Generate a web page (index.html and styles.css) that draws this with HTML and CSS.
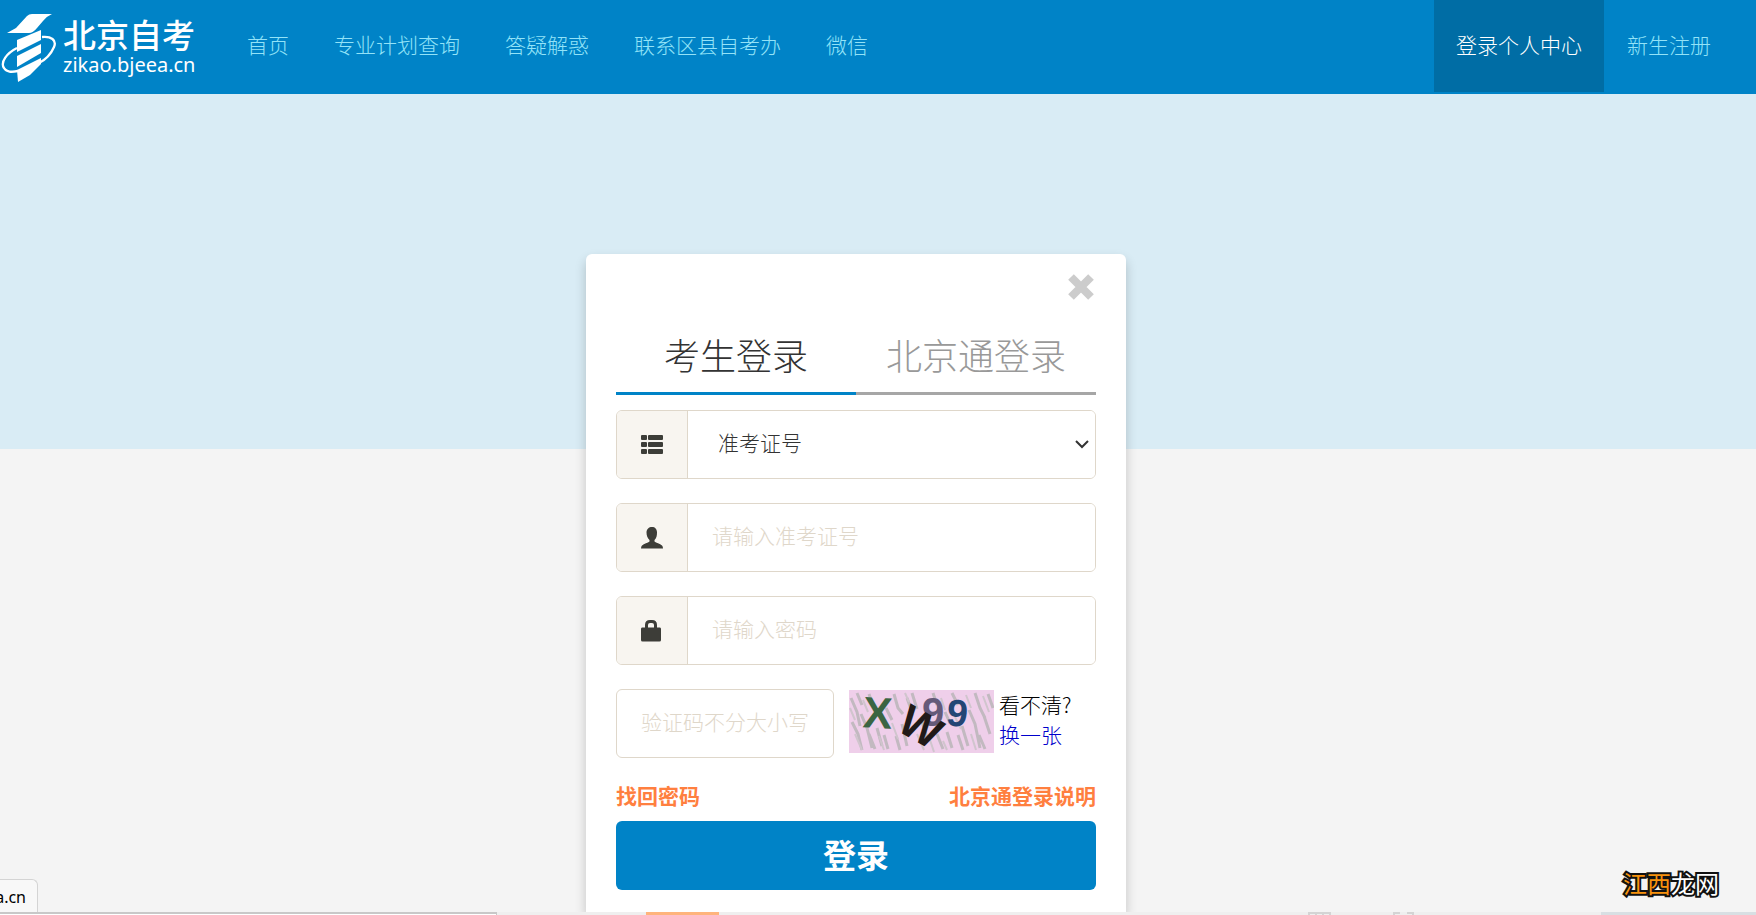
FILE: index.html
```html
<!DOCTYPE html>
<html lang="zh-CN">
<head>
<meta charset="utf-8">
<title>北京自考 - 登录</title>
<link rel="stylesheet" href="styles.css">
</head>
<body>
<header class="topbar">
  <a class="brand" href="#">
    <svg class="brand-mark" width="58" height="72" viewBox="0 0 58 72" aria-hidden="true">
      <g fill="#fff">
        <path d="M7 20L16 15L27 3Q29 1 32 1H52Q47 3 43 8L37 15Q33 20 29 20Z"/>
        <path d="M17 27L41 17V27L17 39Z"/>
        <path d="M17 43L41 31V40L17 54Z"/>
        <path d="M17 57L41 45V51L30 62L18 69Z"/>
      </g>
      <path d="M42 24C51 23 57 27 54 34C51 41 45 47 39 50M17 35C7 40 0 49 4 55C7 60 13 59 18 58" fill="none" stroke="#fff" stroke-width="2.3"/>
    </svg>
    <span class="brand-text">
      <span class="brand-name">北京自考</span>
      <span class="brand-url">zikao.bjeea.cn</span>
    </span>
  </a>
  <nav class="nav">
    <a href="#">首页</a>
    <a href="#">专业计划查询</a>
    <a href="#">答疑解惑</a>
    <a href="#">联系区县自考办</a>
    <a href="#">微信</a>
  </nav>
  <nav class="nav nav-user">
    <a class="active" href="#">登录个人中心</a>
    <a href="#">新生注册</a>
  </nav>
</header>

<main class="page">
  <section class="card">
    <button class="close" type="button" aria-label="关闭">
      <svg width="28" height="28" viewBox="0 0 28 28" aria-hidden="true"><path d="M4 4L24 24M24 4L4 24" stroke="#ccc" stroke-width="8"/></svg>
    </button>
    <div class="tabs">
      <button class="tab tab-on" type="button">考生登录</button>
      <button class="tab" type="button">北京通登录</button>
    </div>
    <form class="form">
      <div class="group">
        <label class="addon" for="kind" aria-label="证件类型">
          <svg width="22" height="20" viewBox="0 0 22 20" fill="#3d3d38" aria-hidden="true"><rect y="0" width="6" height="5" rx="1"/><rect x="7" y="0" width="15" height="5" rx="1"/><rect y="7" width="6" height="5" rx="1"/><rect x="7" y="7" width="15" height="5" rx="1"/><rect y="14" width="6" height="5" rx="1"/><rect x="7" y="14" width="15" height="5" rx="1"/></svg>
        </label>
        <select class="field select" id="kind"><option>准考证号</option></select>
        <svg class="chevron" width="14" height="10" viewBox="0 0 14 10" aria-hidden="true"><path d="M1 2L7 8L13 2" fill="none" stroke="#333" stroke-width="2"/></svg>
      </div>
      <div class="group">
        <label class="addon" for="user" aria-label="准考证号">
          <svg width="22" height="22" viewBox="0 0 22 22" fill="#3d3d38" aria-hidden="true"><path d="M11 0C14 0 16 2 16 5.500C16 9 15.500 11 13.500 13V14.500C15 16 19 16.500 21 18.500Q22 19.500 22 21.500H0Q0 19.500 1 18.500C3 16.500 7 16 8.500 14.500V13C6.500 11 5.500 9 5.500 5.500C5.500 2 8 0 11 0Z"/></svg>
        </label>
        <input class="field" id="user" type="text" placeholder="请输入准考证号">
      </div>
      <div class="group">
        <label class="addon" for="pass" aria-label="密码">
          <svg width="22" height="22" viewBox="0 0 22 22" fill="#3d3d38" aria-hidden="true"><path d="M1 7.500H19Q20 7.500 20 9V20Q20 21.500 18.500 21.500H1.500Q0 21.500 0 20V9Q0 7.500 1 7.500Z"/><path d="M5.500 8V5Q5.500 1.500 9 1.500H11Q14.500 1.500 14.500 5V8" fill="none" stroke="#3d3d38" stroke-width="3"/></svg>
        </label>
        <input class="field" id="pass" type="password" placeholder="请输入密码">
      </div>
      <div class="captcha">
        <input class="code" type="text" aria-label="验证码" placeholder="验证码不分大小写">
        <svg class="captcha-pic" width="145" height="63" viewBox="0 0 145 63" role="img" aria-label="验证码图片">
          <rect width="145" height="63" fill="#efcfea"/>
          <g fill="none" stroke="#c2b9c0" stroke-width="3">
            <path d="M2 8l6 14 3 14M8 3l5 12M3 32l6 12 4 16M12 24l6 14 5 20M20 44l6 15M28 38l5 18M35 45l4 14M37 18l6 12M45 4l4 14 5 6M53 34l5 22M47 46l4 14M63 3l5 16M72 28l6 20M88 44l6 15M98 42l5 16M96 22l5 11M103 3l6 12M113 36l6 20M120 20l6 14 5 24M126 3l5 15 5 10M135 26l6 18M139 4l5 14M109 45l5 15M130 45l6 14M84 3l4 12M20 4l3 9M58 8l5 14"/>
          </g>
          <g fill="none" stroke="#d0c5cd" stroke-width="2">
            <path d="M6 44l7 16M14 10l5 12M30 46l5 14M43 33l6 16M56 3l4 9M68 44l7 16M92 8l4 12M106 27l6 12M117 5l5 13M122 44l5 16M134 6l6 16M94 51l4 9M1 18l5 12M81 50l4 12"/>
          </g>
          <g class="glyphs">
            <text x="14" y="38" fill="#3b6542" font-size="44" transform="rotate(3 28 22)">X</text>
            <text x="73" y="36" fill="#655a79" font-size="40">9</text>
            <text x="98" y="36" fill="#234675" font-size="38" transform="rotate(6 108 22)">9</text>
            <text x="51" y="50" fill="#211a18" font-size="44" transform="rotate(30 68 36)">W</text>
          </g>
        </svg>
        <p class="captcha-help">看不清?<br><a href="#">换一张</a></p>
      </div>
      <div class="links">
        <a href="#">找回密码</a>
        <a href="#">北京通登录说明</a>
      </div>
      <button class="submit" type="submit">登录</button>
    </form>
  </section>
</main>

<footer class="strip">
  <span class="strip-box"></span>
  <span class="strip-tab"></span>
  <span class="strip-icons">
    <svg width="110" height="3" viewBox="0 0 110 3" aria-hidden="true"><path d="M1 3V1H22V3M8 1V3M15 1V3M86 3V1H92M99 1H105V3" fill="none" stroke="#d4d4d4" stroke-width="2"/></svg>
  </span>
  <span class="strip-end"></span>
</footer>
<div class="status">a.cn</div>
<div class="watermark"><span>江西</span>龙网</div>
</body>
</html>
```

FILE: styles.css
```css
* { box-sizing: border-box; }

body {
  margin: 0;
  height: 100vh;
  overflow: hidden;
  display: flex;
  flex-direction: column;
  background: #f4f4f4;
  color: #000;
  font: 300 21px/30px "Noto Sans CJK SC", sans-serif;
}

a { text-decoration: none; }
button, input, select { font: inherit; }

.topbar {
  flex: none;
  display: flex;
  height: 94px;
  padding-right: 23px;
  background: #0083c7;
}

.brand {
  display: flex;
  align-items: flex-start;
  width: 225px;
  padding-top: 13px;
  color: #fff;
}
.brand-text {
  display: flex;
  flex-direction: column;
  padding: 2px 0 0 5px;
}
.brand-name { font-size: 33px; line-height: 38px; font-weight: 500; }
.brand-url { font: 400 20px/24px "Noto Sans", sans-serif; }

.nav { display: flex; gap: 1px; height: 92px; }
.nav a {
  display: flex;
  align-items: center;
  padding: 0 22px 4px;
  color: #93e3f8;
}
.nav-user { margin-left: auto; }
.nav .active { background: #006da5; color: #fff; }

.page {
  flex: 1;
  min-height: 0;
  display: flex;
  justify-content: center;
  padding: 160px 44px 0 0;
  background: linear-gradient(#d9ecf5 355px, #f4f4f4 355px);
}

.card {
  width: 540px;
  padding: 19px 30px 0;
  background: #fff;
  border-radius: 6px 6px 0 0;
  box-shadow: 0 6px 12px rgba(0, 0, 0, 0.2);
}
.close {
  display: block;
  margin: 0 1px 0 auto;
  padding: 0;
  border: 0;
  background: none;
  height: 28px;
}
.close svg { display: block; }

.tabs { display: flex; margin: 19px 0 15px; }
.tab {
  flex: 1;
  height: 75px;
  padding: 0 0 4px;
  border: 0;
  border-bottom: 3px solid #a6a6a6;
  background: none;
  color: #999;
  font-size: 36px;
  line-height: 68px;
}
.tab-on { border-color: #0083c7; color: #333; }

.form { display: flex; flex-direction: column; }
.group {
  position: relative;
  display: flex;
  height: 69px;
  margin-bottom: 24px;
  border: 1px solid #dfd7ca;
  border-radius: 6px;
  overflow: hidden;
}
.addon {
  display: flex;
  align-items: center;
  justify-content: center;
  width: 71px;
  background: #f8f5f0;
  border-right: 1px solid #dfd7ca;
}
.field {
  flex: 1;
  min-width: 0;
  padding: 0 24px 5px;
  border: 0;
  outline: 0;
  background: #fff;
  color: #333;
}
.select { appearance: none; padding-left: 30px; }
.chevron { position: absolute; right: 6px; top: 28px; pointer-events: none; }
::placeholder { color: #dfd7ca; opacity: 1; }

.captcha { display: flex; height: 69px; }
.code {
  width: 218px;
  padding: 0 24px 5px;
  border: 1px solid #dfd7ca;
  border-radius: 6px;
  outline: 0;
  background: #fff;
}
.captcha-pic { margin: 1px 5px 0 15px; }
.glyphs { font-family: "Liberation Sans", sans-serif; font-weight: 700; }
.captcha-help { margin: 0; }
.captcha-help a { color: #00c; }

.links {
  display: flex;
  justify-content: space-between;
  padding: 22px 0 11px;
  font-weight: 700;
}
.links a { color: #ff7f3f; }

.submit {
  height: 69px;
  padding: 0 0 4px;
  border: 0;
  border-radius: 6px;
  background: #0083c7;
  color: #fff;
  font-size: 33px;
  font-weight: 700;
}

.strip {
  flex: none;
  position: relative;
  display: flex;
  height: 3px;
  background: #efefef;
}
.strip-box { width: 28.3%; border: solid #c8c8c8; border-width: 2px 1px 0 0; background: #fff; }
.strip-tab { width: 73px; margin-left: 149px; background: #ffb47c; }
.strip-icons { display: flex; margin-left: auto; }
.strip-end { width: 155px; margin-left: 183px; background: #d8dfe3; }

.status {
  position: absolute;
  left: 0;
  bottom: 3px;
  width: 38px;
  height: 33px;
  padding-right: 11px;
  display: flex;
  justify-content: flex-end;
  border: 1px solid #d4d4d4;
  border-width: 1px 1px 0 0;
  border-radius: 0 6px 0 0;
  background: #f8f8f8;
  overflow: hidden;
  font: 400 16px/34px "Noto Sans", sans-serif;
}
.watermark {
  position: absolute;
  right: 37px;
  bottom: 17px;
  color: #fff;
  font-size: 24px;
  font-weight: 400;
  -webkit-text-stroke: 4px #111;
  paint-order: stroke fill;
}
.watermark span { color: #f7910d; }
```
